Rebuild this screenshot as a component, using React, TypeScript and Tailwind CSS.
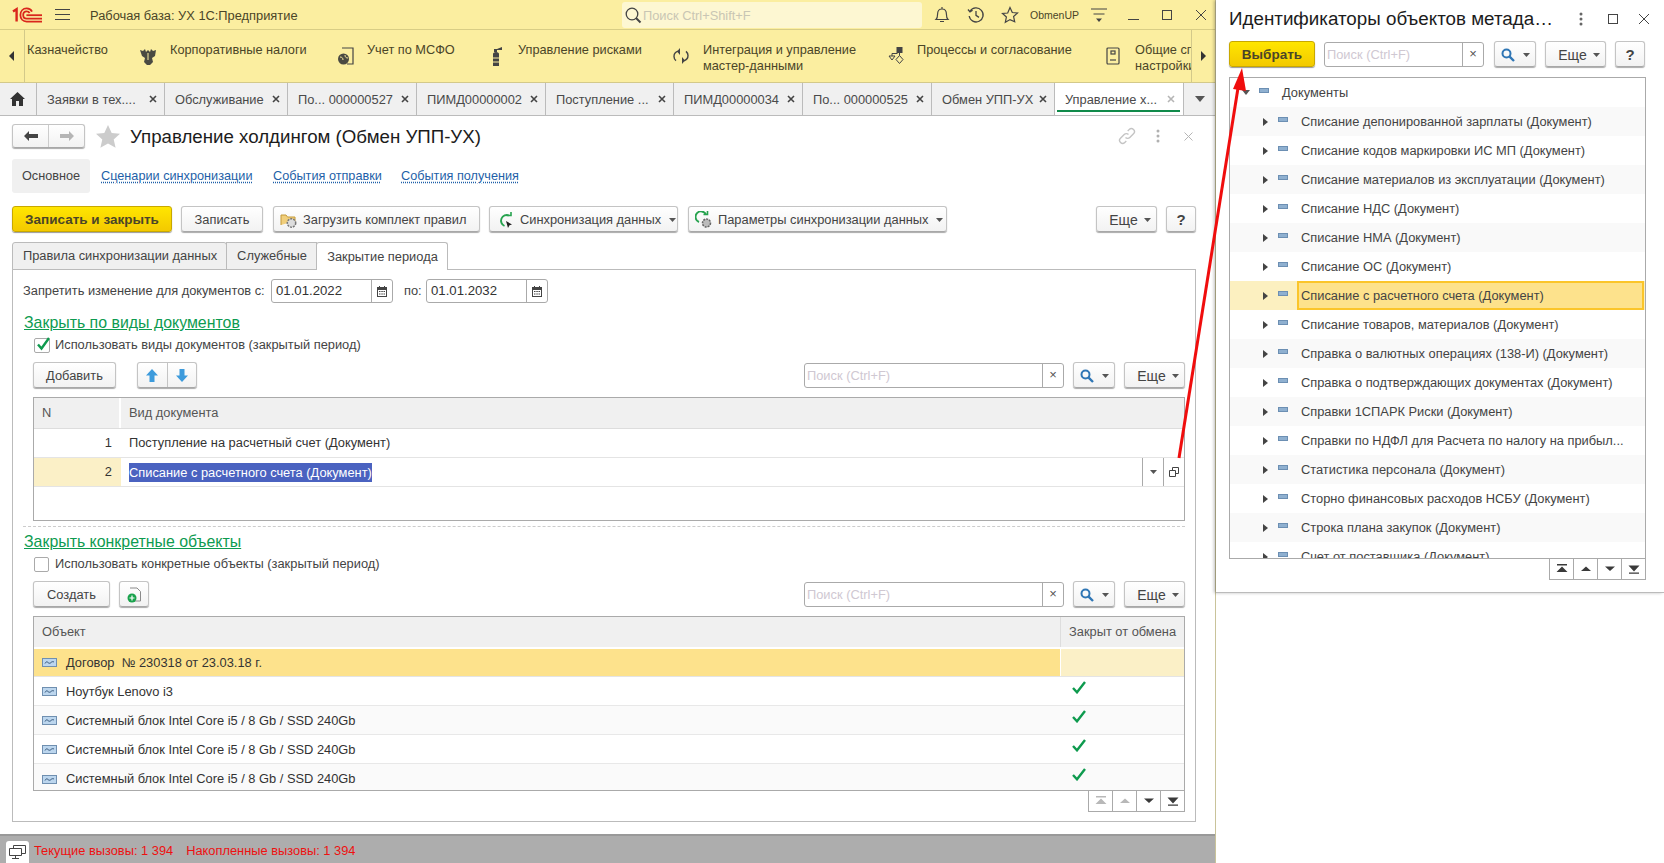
import type { ReactNode } from "react";

// small drop-down triangle used on toolbar buttons
function Caret({ className = "ml-[6px]" }: { className?: string }) {
  return (
    <svg width="7" height="4" viewBox="0 0 7 4" className={`shrink-0 ${className}`}>
      <path d="M0 0h7L3.5 4z" fill="#555" />
    </svg>
  );
}

function Btn({ className = "", children }: { className?: string; children: ReactNode }) {
  return (
    <div
      className={`flex h-[26px] shrink-0 items-center justify-center whitespace-nowrap rounded-[3px] border border-[#c4c4c4] border-b-[#a8a8a8] bg-gradient-to-b from-white to-[#f2f2f2] pt-[2px] text-[12.85px] text-[#444] shadow-[0_1px_1px_#aaa] ${className}`}
    >
      {children}
    </div>
  );
}

function YellowBtn({ className = "", children }: { className?: string; children: ReactNode }) {
  return (
    <div
      className={`flex h-[26px] shrink-0 items-center justify-center rounded-[3px] border border-[#c8a800] bg-gradient-to-b from-[#ffe600] to-[#f3c900] pt-[2px] text-[13.5px] font-bold text-[#4a4528] shadow-[0_1px_1px_#999] ${className}`}
    >
      {children}
    </div>
  );
}

function SearchIcon() {
  return (
    <svg width="14" height="14" viewBox="0 0 14 14" fill="none">
      <circle cx="5.5" cy="5.5" r="4" stroke="#2f76b5" strokeWidth="2" />
      <path d="M8.6 8.6L13 13" stroke="#2f76b5" strokeWidth="2.4" />
    </svg>
  );
}

function SearchBox({ className = "" }: { className?: string }) {
  return (
    <div className={`flex h-[25px] items-stretch rounded-[3px] border border-[#aaa] bg-white ${className}`}>
      <div className="flex flex-1 items-center pl-[2px] pt-[2px] text-[12.85px] text-[#cfc8d2]">Поиск (Ctrl+F)</div>
      <div className="flex w-[21px] items-center justify-center border-l border-[#aaa] text-[13px] text-[#555]">×</div>
    </div>
  );
}

function FinderButtons({ className = "" }: { className?: string }) {
  return (
    <div className={`flex items-center gap-[9px] ${className}`}>
      <Btn className="w-[42px] gap-[8px]">
        <SearchIcon />
        <Caret className="" />
      </Btn>
      <Btn className="w-[61px]">
        <span className="pl-[7px] text-[14px]">Еще</span>
        <Caret />
      </Btn>
    </div>
  );
}

function PagerIcon({ kind, on }: { kind: "first" | "up" | "down" | "last"; on: boolean }) {
  const c = on ? "#3a3a3a" : "#b8b8b8";
  return (
    <svg width="14" height="10" viewBox="0 0 14 10">
      {kind === "first" && <path d="M2 0h10v1.4H2zM7 2.500l5.500 5.500H1.500z" fill={c} />}
      {kind === "up" && <path d="M7 2.500l5 4.500H2z" fill={c} />}
      {kind === "down" && <path d="M2 2.500h10L7 7z" fill={c} />}
      {kind === "last" && <path d="M1.500 1.500h11L7 7.500zM2 8.400h10v1.400H2z" fill={c} />}
    </svg>
  );
}

function Pager({ dim }: { dim: boolean }) {
  const items = ["first", "up", "down", "last"] as const;
  return (
    <div className="flex h-[21px] w-[97px] shrink-0 self-end border border-t-0 border-[#aaa] bg-white">
      {items.map((k, i) => (
        <div key={k} className="flex flex-1 items-center justify-center border-l border-[#aaa] first:border-l-0">
          <PagerIcon kind={k} on={!dim || i > 1} />
        </div>
      ))}
    </div>
  );
}

function Logo1C() {
  return (
    <svg width="30" height="16" viewBox="0 0 30 16" fill="none" stroke="#d9261c">
      <path d="M1 4.5L4.6 2.2V14.5" strokeWidth="2.4" />
      <path d="M20 4.6C19 2.4 16.9 1.4 14.6 1.4C11 1.4 8.4 4.2 8.4 8C8.4 11.8 11 14.6 14.6 14.6H30" strokeWidth="1.8" />
      <path d="M17.6 6C17 5 15.9 4.4 14.6 4.4C12.6 4.4 11.2 6 11.2 8C11.2 10 12.6 11.6 14.6 11.6H30" strokeWidth="1.8" />
      <path d="M14.4 8.2H30" strokeWidth="1.8" />
    </svg>
  );
}

function TopBar() {
  return (
    <div className="flex h-[30px] shrink-0 items-center border-b border-[#d8cd85] bg-[#fbeea0] text-[#4a4528]">
      <div className="ml-[12px]">
        <Logo1C />
      </div>
      <svg width="15" height="13" viewBox="0 0 15 13" className="ml-[13px]" stroke="#444" strokeWidth="1.2">
        <path d="M0 1.5h15M0 6.5h15M0 11.5h15" />
      </svg>
      <span className="ml-[20px] w-[532px] whitespace-nowrap pt-[2px] text-[12.85px]">Рабочая база: УХ 1С:Предприятие</span>
      <div className="flex h-[26px] w-[300px] items-center rounded-[3px] bg-[#fdf7d2] pl-[2px] text-[12.85px] text-[#c9c6b4]">
        <svg width="18" height="18" viewBox="0 0 18 18" fill="none" stroke="#444" className="mr-[1px]">
          <circle cx="8" cy="8" r="5.8" strokeWidth="1.3" />
          <path d="M12 12l4.5 4.5" strokeWidth="2" />
        </svg>
        <span className="pt-[2px]">Поиск Ctrl+Shift+F</span>
      </div>
      <svg width="16" height="18" viewBox="0 0 16 18" fill="none" stroke="#444" strokeWidth="1.2" className="ml-[12px]">
        <path d="M2 13.5c1.4-1.4 1.6-3 1.6-5.5C3.6 5 5.4 3 8 3s4.4 2 4.4 5c0 2.5.2 4.1 1.6 5.5zM8 1v2M6 15.5h4" />
      </svg>
      <svg width="18" height="18" viewBox="0 0 18 18" fill="none" stroke="#444" strokeWidth="1.3" className="ml-[17px]">
        <path d="M3.2 5.2A7 7 0 1 1 2.2 10M1 3.5l2 2.4 2.6-1.6M9 5v4.4l3 2" />
      </svg>
      <svg width="18" height="18" viewBox="0 0 18 18" fill="none" stroke="#444" strokeWidth="1.2" className="ml-[16px]">
        <path d="M9 1.5l2.3 5 5.2.5-3.9 3.5 1.1 5.3L9 13.6l-4.7 2.7 1.1-5.3L1.5 7.5l5.2-.5z" />
      </svg>
      <span className="ml-[11px] w-[47px] whitespace-nowrap pt-[2px] text-[10.5px]">ObmenUP</span>
      <svg width="16" height="16" viewBox="0 0 16 16" stroke="#444" strokeWidth="1.2" className="ml-[14px]">
        <path d="M0 2h16M2.5 7h11" />
        <path d="M5 11.5h6L8 15z" fill="#444" stroke="none" />
      </svg>
      <div className="ml-[21px] h-[1px] w-[11px] translate-y-[5px] bg-[#444]" />
      <div className="ml-[23px] h-[10px] w-[10px] border border-[#444]" />
      <svg width="12" height="12" viewBox="0 0 12 12" stroke="#444" className="ml-[23px]">
        <path d="M1 1l10 10M11 1L1 11" />
      </svg>
    </div>
  );
}

function NavIcon({ kind }: { kind: string }) {
  if (kind === "eagle")
    return (
      <svg width="16" height="18" viewBox="0 0 16 18" fill="#4a4a42">
        <path d="M0 3l3 1 2-2 1 3 2-2 2 2 1-3 2 2 3-1-1 6-3 2 1 4-3 3H7l-3-3 1-4-3-2z" />
        <path d="M8 6v7" stroke="#fbeea0" strokeWidth="1" />
      </svg>
    );
  if (kind === "globe")
    return (
      <svg width="17" height="19" viewBox="0 0 17 19" fill="none" stroke="#444">
        <path d="M5 1h11v16H10" strokeWidth="1.2" />
        <circle cx="6.5" cy="12" r="5.5" fill="#4a4a42" stroke="none" />
        <path d="M3 10c2 0 3 1 3 3M8 8c0 2 1 3 3 3" stroke="#fbeea0" />
      </svg>
    );
  if (kind === "fire")
    return (
      <svg width="11" height="19" viewBox="0 0 11 19" fill="#444">
        <path d="M2 7c0-1 1-2 3-2s3 1 3 2v12H2zM3 2h3v3H3zM6 2l5-2v3H6z" />
        <path d="M2 11h6M2 15h6" stroke="#fbeea0" />
      </svg>
    );
  if (kind === "cycle")
    return (
      <svg width="16" height="18" viewBox="0 0 16 18" fill="none" stroke="#444" strokeWidth="1.4">
        <path d="M5 4.2C2.6 5 1 7 1 9.4c0 1.7.8 3.2 2 4.2M11 13.8c2.4-.8 4-2.8 4-5.2 0-1.7-.8-3.2-2-4.2" />
        <path d="M7 1v7L4 4.4zM9 17v-7l3 3.6z" fill="#444" stroke="none" />
      </svg>
    );
  if (kind === "flow")
    return (
      <svg width="16" height="18" viewBox="0 0 16 18" fill="none" stroke="#444">
        <rect x="9" y="0.5" width="5" height="5" fill="#444" />
        <path d="M11.5 5.500v3M4 9V6.500h5.500M1 9h6L4 13zM11.500 8.500l3.500 4-3.500 4-3.500-4z" />
      </svg>
    );
  return (
    <svg width="14" height="18" viewBox="0 0 14 18" fill="none" stroke="#444" strokeWidth="1.2">
      <rect x="1" y="1" width="12" height="16" rx="1" />
      <rect x="5" y="4" width="4" height="3" />
      <path d="M4 13h6" />
    </svg>
  );
}

const navItems = [
  { icon: "", text: ["Казначейство"], box: "w-[113px]", iconBox: "w-0" },
  { icon: "eagle", text: ["Корпоративные налоги"], box: "w-[197px]", iconBox: "w-[30px]" },
  { icon: "globe", text: ["Учет по МСФО"], box: "w-[154px]", iconBox: "w-[30px]" },
  { icon: "fire", text: ["Управление рисками"], box: "w-[182px]", iconBox: "w-[27px]" },
  { icon: "cycle", text: ["Интеграция и управление", "мастер-данными"], box: "w-[215px]", iconBox: "w-[30px]" },
  { icon: "flow", text: ["Процессы и согласование"], box: "w-[218px]", iconBox: "w-[29px]" },
  { icon: "doc", text: ["Общие справочники и", "настройки"], box: "w-[85px]", iconBox: "w-[29px]" },
];

function NavBar() {
  return (
    <div className="flex h-[53px] shrink-0 border-b border-[#d3c98a] bg-[#fbeea0] text-[12.75px] leading-[16px] text-[#4a4528]">
      <div className="flex w-[25px] shrink-0 items-center justify-center border-r border-[#d3c98a]">
        <svg width="5" height="10" viewBox="0 0 5 10" className="-translate-x-[1px]">
          <path d="M5 0v10L0 5z" fill="#333" />
        </svg>
      </div>
      <div className="flex min-w-0 flex-1 overflow-hidden pl-[2px] pt-[12px]">
        {navItems.map((n) => (
          <div key={n.text[0]} className={`flex shrink-0 overflow-hidden ${n.box}`}>
            {n.icon && (
              <div className={`shrink-0 pt-[5px] ${n.iconBox}`}>
                <NavIcon kind={n.icon} />
              </div>
            )}
            <div className="whitespace-nowrap">
              {n.text.map((t) => (
                <div key={t}>{t}</div>
              ))}
            </div>
          </div>
        ))}
      </div>
      <div className="flex w-[24px] shrink-0 items-center justify-center border-l border-[#d3c98a]">
        <svg width="5" height="10" viewBox="0 0 5 10">
          <path d="M0 0v10l5-5z" fill="#333" />
        </svg>
      </div>
    </div>
  );
}

const tabs = [
  { t: "Заявки в тех....", w: "w-[128px]" },
  { t: "Обслуживание", w: "w-[123px]" },
  { t: "По... 000000527", w: "w-[129px]" },
  { t: "ПИМД00000002", w: "w-[129px]" },
  { t: "Поступление ...", w: "w-[128px]" },
  { t: "ПИМД00000034", w: "w-[129px]" },
  { t: "По... 000000525", w: "w-[129px]" },
  { t: "Обмен УПП-УХ", w: "w-[123px]" },
];

function TabBar() {
  return (
    <div className="flex h-[33px] shrink-0 border-b border-[#bbb] bg-[#f0f0f0] text-[12.85px] text-[#4a4a4a]">
      <div className="flex w-[37px] items-center justify-center border-r border-[#bbb] pr-[2px]">
        <svg width="15" height="14" viewBox="0 0 15 14" fill="#333">
          <path d="M7.500 0L15 7h-2v7H9V9H6v5H2V7H0z" />
        </svg>
      </div>
      {tabs.map((t) => (
        <div key={t.t} className={`flex items-center justify-between border-r border-[#bbb] pl-[10px] pr-[7px] ${t.w}`}>
          <span className="whitespace-nowrap pt-[2px]">{t.t}</span>
          <svg width="8" height="8" viewBox="0 0 8 8" stroke="#444" strokeWidth="1.6">
            <path d="M1 1l6 6M7 1L1 7" />
          </svg>
        </div>
      ))}
      <div className="relative flex w-[129px] items-center justify-between border-r border-[#bbb] bg-white pl-[10px] pr-[8px]">
        <span className="whitespace-nowrap pt-[2px]">Управление х...</span>
        <svg width="8" height="8" viewBox="0 0 8 8" stroke="#b5b5b5" strokeWidth="1.6">
          <path d="M1 1l6 6M7 1L1 7" />
        </svg>
        <div className="absolute bottom-[3px] left-[2px] right-[3px] h-[2px] bg-[#108a4a]" />
      </div>
      <div className="flex flex-1 items-center justify-center">
        <svg width="10" height="6" viewBox="0 0 10 6">
          <path d="M0 0h10L5 6z" fill="#555" />
        </svg>
      </div>
    </div>
  );
}

function DateField({ value }: { value: string }) {
  return (
    <div className="flex h-[24px] w-[122px] items-stretch rounded-[3px] border border-[#aaa] bg-white text-[13.2px] text-[#333]">
      <div className="flex flex-1 items-center pl-[4px]">{value}</div>
      <div className="flex w-[21px] items-center justify-center border-l border-[#aaa]">
        <svg width="10" height="11" viewBox="0 0 10 11" fill="#444">
          <path d="M0 1h10v10H0zM1 4v6h8V4z" fillRule="evenodd" />
          <path d="M2 5h1.500v1H2zM4.300 5h1.500v1H4.300zM6.500 5H8v1H6.500zM2 7.500h1.500v1H2zM4.300 7.500h1.500v1H4.300zM6.500 7.500H8v1H6.500zM2 0h1v1H2zM7 0h1v1H7z" />
        </svg>
      </div>
    </div>
  );
}

function Heading({ children }: { children: ReactNode }) {
  return <div className="ml-[1px] h-[18px] text-[15.9px] leading-[18px] text-[#0d9b50] underline underline-offset-[1px]">{children}</div>;
}

function ObjIcon() {
  return (
    <svg width="15" height="9" viewBox="0 0 15 9" className="shrink-0">
      <rect x="0.500" y="0.500" width="14" height="8" fill="#bcd6ee" stroke="#6f8fb0" />
      <path d="M3 5.500c1-2 2-2 3-1s2 1 3 0 2-1 3-.5" fill="none" stroke="#33557a" />
    </svg>
  );
}

function Check() {
  return (
    <svg width="14" height="13" viewBox="0 0 14 13" fill="none" stroke="#0e9a4e" strokeWidth="2.400">
      <path d="M1 7l4 4.300L13 1" />
    </svg>
  );
}

const objects = [
  "Ноутбук Lenovo i3",
  "Системный блок Intel Core i5 / 8 Gb / SSD 240Gb",
  "Системный блок Intel Core i5 / 8 Gb / SSD 240Gb",
  "Системный блок Intel Core i5 / 8 Gb / SSD 240Gb",
];

function ClosingPanel() {
  return (
    <div className="ml-[12px] mr-[19px] flex h-[553px] shrink-0 flex-col border border-[#bbb] px-[10px] text-[12.85px] text-[#444]">
      <div className="mt-[9px] flex items-center">
        <span className="w-[248px] whitespace-nowrap">Запретить изменение для документов с:</span>
        <DateField value="01.01.2022" />
        <span className="ml-[11px] w-[22px]">по:</span>
        <DateField value="01.01.2032" />
      </div>
      <div className="mt-[11px]">
        <Heading>Закрыть по виды документов</Heading>
      </div>
      <div className="ml-[11px] mt-[5px] flex h-[16px] items-center gap-[5px]">
        <div className="relative h-[15px] w-[16px] rounded-[2px] border border-[#aaa] bg-white">
          <svg width="16" height="16" viewBox="0 0 16 16" fill="none" stroke="#0e9a4e" strokeWidth="2.400" className="absolute -top-[3px] left-[1px]">
            <path d="M2 8.500l3.500 4L13 2" />
          </svg>
        </div>
        <span>Использовать виды документов (закрытый период)</span>
      </div>
      <div className="ml-[10px] mt-[9px] flex items-center">
        <Btn className="w-[83px]">Добавить</Btn>
        <div className="ml-[21px] flex h-[26px] w-[60px] items-stretch rounded-[3px] border border-[#c4c4c4] border-b-[#a8a8a8] bg-gradient-to-b from-white to-[#f2f2f2] shadow-[0_1px_1px_#aaa]">
          <div className="flex flex-1 items-center justify-center border-r border-[#c4c4c4]">
            <svg width="12" height="13" viewBox="0 0 12 13">
              <path d="M6 0l6 6.500H8.500V13h-5V6.500H0z" fill="#3d9bdc" />
            </svg>
          </div>
          <div className="flex flex-1 items-center justify-center">
            <svg width="12" height="13" viewBox="0 0 12 13">
              <path d="M6 13L0 6.500h3.500V0h5v6.500H12z" fill="#3d9bdc" />
            </svg>
          </div>
        </div>
        <SearchBox className="ml-auto w-[260px]" />
        <FinderButtons className="ml-[9px]" />
      </div>
      <div className="ml-[10px] mt-[9px] flex h-[124px] shrink-0 flex-col border border-[#aaa] text-[#333]">
        <div className="flex h-[31px] shrink-0 border-b border-[#ddd] bg-[#f0f0f0] text-[#555]">
          <div className="flex w-[87px] items-center border-r-2 border-white pl-[8px]">N</div>
          <div className="flex items-center pl-[8px]">Вид документа</div>
        </div>
        <div className="flex h-[29px] shrink-0 items-center border-b border-[#e4e4e4]">
          <div className="w-[78px] text-right">1</div>
          <div className="pl-[17px]">Поступление на расчетный счет (Документ)</div>
        </div>
        <div className="flex h-[29px] shrink-0 border-b border-[#e4e4e4]">
          <div className="flex w-[87px] items-center justify-end bg-[#fbf0c7] pr-[9px]">2</div>
          <div className="flex flex-1 items-center pl-[8px] pt-[1px]">
            <span className="bg-[#4a62c0] text-white">Списание с расчетного счета (Документ)</span>
          </div>
          <div className="flex w-[21px] items-center justify-center border-l border-[#aaa]">
            <Caret className="" />
          </div>
          <div className="flex w-[21px] items-center justify-center border-l border-[#aaa]">
            <svg width="10" height="10" viewBox="0 0 10 10" fill="none" stroke="#444">
              <path d="M3.500 3.500v-3h6v6h-3M.5 3.500h6v6h-6z" />
            </svg>
          </div>
        </div>
      </div>
      <div className="mt-[5px] shrink-0 border-t border-dashed border-[#ccc]" />
      <div className="mt-[6px]">
        <Heading>Закрыть конкретные объекты</Heading>
      </div>
      <div className="ml-[11px] mt-[5px] flex h-[16px] items-center gap-[5px]">
        <div className="h-[15px] w-[15px] rounded-[2px] border border-[#aaa] bg-white" />
        <span className="ml-[1px]">Использовать конкретные объекты (закрытый период)</span>
      </div>
      <div className="ml-[10px] mt-[9px] flex items-center">
        <Btn className="w-[77px]">Создать</Btn>
        <Btn className="ml-[9px] w-[30px]">
          <svg width="15" height="16" viewBox="0 0 15 16" fill="none">
            <path d="M3 1h7l3.500 3.500V14H6" stroke="#8a8a8a" />
            <circle cx="5" cy="11" r="4.500" fill="#19a24c" />
            <path d="M2.500 11h5M5 8.500v5" stroke="#fff" strokeWidth="1.200" />
          </svg>
        </Btn>
        <SearchBox className="ml-auto w-[260px]" />
        <FinderButtons className="ml-[9px]" />
      </div>
      <div className="ml-[10px] mt-[9px] flex h-[175px] shrink-0 flex-col overflow-hidden border border-[#aaa] text-[#333]">
        <div className="flex h-[32px] shrink-0 border-b-2 border-white bg-[#f0f0f0] text-[#555]">
          <div className="flex flex-1 items-center pl-[8px]">Объект</div>
          <div className="flex w-[124px] items-center border-l border-[#ddd] pl-[8px]">Закрыт от обмена</div>
        </div>
        <div className="flex h-[28px] shrink-0 border-b border-[#e4e4e4]">
          <div className="flex flex-1 items-center gap-[9px] bg-[#fde28c] pl-[8px]">
            <ObjIcon />
            Договор &nbsp;№ 230318 от 23.03.18 г.
          </div>
          <div className="w-[124px] border-l border-white bg-[#fbf0c7]" />
        </div>
        {objects.map((o, i) => (
          <div key={i} className={`flex h-[29px] shrink-0 border-b border-[#e8e8e8] last:border-b-0 ${i % 2 ? "bg-[#fafafa]" : "bg-white"}`}>
            <div className="flex flex-1 items-center gap-[9px] pl-[8px] pt-[1px]">
              <ObjIcon />
              {o}
            </div>
            <div className="w-[124px] pl-[12px] pt-[4px]">
              <Check />
            </div>
          </div>
        ))}
      </div>
      <Pager dim />
    </div>
  );
}

function MainWindow() {
  return (
    <div className="flex w-[1216px] shrink-0 flex-col border-r border-[#c9c39a] bg-white">
      <TopBar />
      <NavBar />
      <TabBar />
      <div className="mt-[8px] flex h-[24px] shrink-0 items-center pl-[12px] pr-[21px]">
        <div className="flex h-[24px] w-[73px] items-stretch rounded-[3px] border border-[#c4c4c4] border-b-[#a8a8a8] bg-gradient-to-b from-white to-[#f2f2f2] shadow-[0_1px_1px_#aaa]">
          <div className="flex flex-1 items-center justify-center border-r border-[#ccc]">
            <svg width="14" height="10" viewBox="0 0 14 10">
              <path d="M5 0v3h9v4H5v3L0 5z" fill="#444" />
            </svg>
          </div>
          <div className="flex flex-1 items-center justify-center">
            <svg width="14" height="10" viewBox="0 0 14 10">
              <path d="M9 0v3H0v4h9v3l5-5z" fill="#b5b5b5" />
            </svg>
          </div>
        </div>
        <svg width="24" height="23" viewBox="0 0 24 23" className="ml-[11px]">
          <path d="M12 0l3.700 8 8.300.8-6.300 5.600 1.900 8.400L12 18.400l-7.600 4.400 1.900-8.400L0 8.800 8.300 8z" fill="#ccc" />
        </svg>
        <span className="ml-[10px] pt-[2px] text-[18.7px] text-[#1c1c1c]">Управление холдингом (Обмен УПП-УХ)</span>
        <svg width="18" height="18" viewBox="0 0 18 18" fill="none" stroke="#c4c4c4" strokeWidth="1.400" className="ml-auto">
          <path d="M7.500 10.500a3 3 0 0 0 4.300 0l3.700-3.700a3 3 0 0 0-4.300-4.300L9.700 3.900M10.500 7.500a3 3 0 0 0-4.300 0l-3.700 3.700a3 3 0 0 0 4.300 4.300l1.500-1.400" />
        </svg>
        <svg width="4" height="14" viewBox="0 0 4 14" fill="#b0b0b0" className="ml-[20px]">
          <circle cx="2" cy="2" r="1.500" />
          <circle cx="2" cy="7" r="1.500" />
          <circle cx="2" cy="12" r="1.500" />
        </svg>
        <svg width="9" height="9" viewBox="0 0 9 9" stroke="#b5b5b5" className="ml-[24px] mr-[1px]">
          <path d="M.5.500l8 8M8.500.500l-8 8" />
        </svg>
      </div>
      <div className="ml-[12px] mt-[11px] flex h-[34px] shrink-0 items-center text-[12.7px]">
        <div className="flex h-full w-[78px] items-center justify-center rounded-[3px] bg-[#f0f0f0] pt-[2px] text-[#444]">Основное</div>
        <span className="ml-[11px] w-[172px] whitespace-nowrap pt-[2px] text-[#1e5fa8] underline decoration-dotted">Сценарии синхронизации</span>
        <span className="w-[128px] whitespace-nowrap pt-[2px] text-[#1e5fa8] underline decoration-dotted">События отправки</span>
        <span className="whitespace-nowrap pt-[2px] text-[#1e5fa8] underline decoration-dotted">События получения</span>
      </div>
      <div className="ml-[12px] mr-[19px] mt-[13px] flex shrink-0 items-center">
        <YellowBtn className="w-[160px]">Записать и закрыть</YellowBtn>
        <Btn className="ml-[9px] w-[82px]">Записать</Btn>
        <Btn className="ml-[10px] w-[207px] justify-start gap-[5px] pl-[6px]">
          <svg width="18" height="17" viewBox="0 0 18 17" fill="none">
            <path d="M1 13V3h5l1.500 2H15v4" fill="#f1cf7c" stroke="#c49a3a" />
            <circle cx="11.500" cy="11" r="4.200" fill="#ddd" stroke="#777" strokeWidth="1.500" strokeDasharray="2 1" />
          </svg>
          Загрузить комплект правил
        </Btn>
        <Btn className="ml-[9px] w-[189px] justify-start gap-[6px] pl-[7px]">
          <svg width="17" height="17" viewBox="0 0 17 17" fill="none">
            <path d="M12 3.500A5.500 5.500 0 1 0 7.500 14" stroke="#27a34f" strokeWidth="1.900" />
            <path d="M9.500 3.500h4.500V0" stroke="#27a34f" strokeWidth="1.600" />
            <path d="M9 9l6 3.500-2.500.7L11 16z" fill="#222" />
          </svg>
          Синхронизация данных
          <Caret className="ml-[2px]" />
        </Btn>
        <Btn className="ml-[10px] w-[259px] justify-start gap-[5px] pl-[6px]">
          <svg width="18" height="18" viewBox="0 0 18 18" fill="none">
            <path d="M11 3.500A5.500 5.500 0 1 0 4 11" stroke="#27a34f" strokeWidth="1.900" />
            <path d="M8.500 3.500h4V0" stroke="#27a34f" strokeWidth="1.600" />
            <circle cx="11.500" cy="12" r="4" fill="#bbb" stroke="#666" strokeWidth="1.500" strokeDasharray="2 1" />
          </svg>
          Параметры синхронизации данных
          <Caret className="ml-[3px]" />
        </Btn>
        <Btn className="ml-auto w-[61px]">
          <span className="pl-[7px] text-[14px]">Еще</span>
          <Caret />
        </Btn>
        <Btn className="ml-[9px] w-[30px] text-[15px] font-bold">?</Btn>
      </div>
      <div className="relative z-10 ml-[12px] mt-[10px] -mb-[1px] flex h-[28px] shrink-0 text-[12.85px] text-[#444]">
        <div className="flex w-[215px] items-center justify-center rounded-t-[3px] border border-[#bbb] bg-[#f0f0f0] pl-[1px]">Правила синхронизации данных</div>
        <div className="-ml-[1px] flex w-[91px] items-center justify-center border border-[#bbb] bg-[#f0f0f0] pl-[1px]">Служебные</div>
        <div className="-ml-[1px] flex w-[132px] items-center justify-center rounded-t-[3px] border border-b-0 border-[#bbb] bg-white pl-[1px]">Закрытие периода</div>
      </div>
      <ClosingPanel />
      <div className="mt-auto flex h-[29px] shrink-0 items-end border-t-2 border-[#999] bg-[#adadad] pl-[6px] text-[12.85px] text-[#ee1111]">
        <div className="mr-[5px] flex h-[22px] w-[23px] items-center justify-center rounded-t-[3px] bg-white">
          <svg width="17" height="14" viewBox="0 0 17 14" fill="none" stroke="#444">
            <path d="M4.500 3V.5h12v8h-4M.5 3.500h12v7h-12zM6.500 10.500v2.500M3 13.500h7" />
          </svg>
        </div>
        <span className="mb-[3px]">Текущие вызовы: 1 394</span>
        <span className="mb-[3px] ml-[13px]">Накопленные вызовы: 1 394</span>
      </div>
    </div>
  );
}

const treeRows = [
  "Списание депонированной зарплаты (Документ)",
  "Списание кодов маркировки ИС МП (Документ)",
  "Списание материалов из эксплуатации (Документ)",
  "Списание НДС (Документ)",
  "Списание НМА (Документ)",
  "Списание ОС (Документ)",
  "Списание с расчетного счета (Документ)",
  "Списание товаров, материалов (Документ)",
  "Справка о валютных операциях (138-И) (Документ)",
  "Справка о подтверждающих документах (Документ)",
  "Справки 1СПАРК Риски (Документ)",
  "Справки по НДФЛ для Расчета по налогу на прибыл...",
  "Статистика персонала (Документ)",
  "Сторно финансовых расходов НСБУ (Документ)",
  "Строка плана закупок (Документ)",
  "Счет от поставщика (Документ)",
];

function TreeMark() {
  return <div className="h-[5px] w-[10px] shrink-0 -translate-y-[2px] border border-[#6c8fb3] bg-[#8fb0d0]" />;
}

function ChooserPanel() {
  return (
    <div className="flex h-[593px] flex-col border-b border-[#bbb] bg-white pl-[13px] pr-[18px] text-[12.85px] text-[#444]">
      <div className="flex h-[41px] shrink-0 items-center pb-[3px]">
        <span className="whitespace-nowrap text-[18.8px] text-[#1c1c1c]">Идентификаторы объектов метада…</span>
        <svg width="4" height="14" viewBox="0 0 4 14" fill="#666" className="ml-auto">
          <circle cx="2" cy="2" r="1.500" />
          <circle cx="2" cy="7" r="1.500" />
          <circle cx="2" cy="12" r="1.500" />
        </svg>
        <div className="ml-[25px] h-[10px] w-[10px] border border-[#444]" />
        <svg width="12" height="12" viewBox="0 0 12 12" stroke="#444" className="-mr-[4px] ml-[20px]">
          <path d="M1 1l10 10M11 1L1 11" />
        </svg>
      </div>
      <div className="flex shrink-0 items-center">
        <YellowBtn className="w-[86px]">Выбрать</YellowBtn>
        <SearchBox className="ml-[9px] w-[160px]" />
        <FinderButtons className="ml-[10px]" />
        <Btn className="ml-[9px] w-[30px] text-[15px] font-bold">?</Btn>
      </div>
      <div className="mt-[10px] h-[482px] shrink-0 overflow-hidden border border-[#aaa]">
        <div className="flex h-[29px] items-center">
          <svg width="8" height="5" viewBox="0 0 8 5" className="ml-[12px]">
            <path d="M0 0h8L4 5z" fill="#555" />
          </svg>
          <div className="ml-[9px]">
            <TreeMark />
          </div>
          <span className="ml-[13px]">Документы</span>
        </div>
        {treeRows.map((r, i) => {
          const selected = i === 6;
          return (
            <div key={r} className={`flex h-[29px] items-center ${selected ? "bg-[#fcf0c0]" : i % 2 ? "bg-white" : "bg-[#f9f9f9]"}`}>
              <svg width="5" height="8" viewBox="0 0 5 8" className="ml-[33px] shrink-0">
                <path d="M0 0l5 4-5 4z" fill="#444" />
              </svg>
              <div className="ml-[10px]">
                <TreeMark />
              </div>
              <span
                className={`ml-[9px] mr-[1px] flex h-full flex-1 items-center whitespace-nowrap border-2 pl-[2px] ${selected ? "border-[#fbc52a] bg-[#fde28c]" : "border-transparent"}`}
              >
                {r}
              </span>
            </div>
          );
        })}
      </div>
      <Pager dim={false} />
    </div>
  );
}

export default function App() {
  return (
    <div className="relative flex h-[863px] w-[1664px] overflow-hidden bg-white font-['Liberation_Sans',Arial,sans-serif]">
      <MainWindow />
      <div className="z-10 flex w-[448px] flex-col items-stretch self-start shadow-[-2px_0_3px_rgba(0,0,0,0.25)]">
        <ChooserPanel />
      </div>
      {/* red arrow pointing from the open-form button to the select button */}
      <svg width="1664" height="863" className="pointer-events-none absolute left-0 top-0 z-20">
        <path d="M1179 458L1238 88" stroke="#f00d0d" strokeWidth="3" />
        <path d="M1242 68L1233 89L1246 91z" fill="#f00d0d" />
      </svg>
    </div>
  );
}
